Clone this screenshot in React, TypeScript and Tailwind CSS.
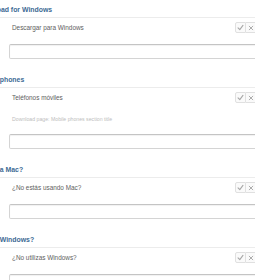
function Check() {
  return (
    <svg width="7" height="7" viewBox="0 0 10 10" fill="none">
      <path d="M1.5 5.5 L4 8 L8.5 2" stroke="#a8a8a8" strokeWidth="1.6" strokeLinecap="round" strokeLinejoin="round" />
    </svg>
  );
}

function Cross() {
  return (
    <svg width="6" height="6" viewBox="0 0 10 10" fill="none">
      <path d="M2 2 L8 8 M8 2 L2 8" stroke="#a8a8a8" strokeWidth="1.6" strokeLinecap="round" />
    </svg>
  );
}

type SectionProps = {
  title: string;
  label: string;
  note?: string;
};

function Section({ title, label, note }: SectionProps) {
  return (
    <div className="pb-[11px]">
      {/* Header, scrolled off to the left */}
      <div className="h-[17px] pt-[6px] ml-[-24px] text-[6.9px] leading-[8px] font-bold text-[#3d6a94] whitespace-nowrap">
        {title}
      </div>

      {/* Row */}
      <div className="border-t border-[#ececec] h-[20px] flex items-center justify-between pl-[12px]">
        <span className="text-[6.4px] text-[#5e5e5e] whitespace-nowrap">{label}</span>
        <div className="flex items-center mr-[-2px]">
          <div className="w-[11px] h-[11px] border border-[#e0e0e0] rounded-l-[2px] flex items-center justify-center bg-[#fafafa]">
            <Check />
          </div>
          <div className="w-[11px] h-[11px] border border-l-0 border-[#e0e0e0] flex items-center justify-center bg-[#fafafa]">
            <Cross />
          </div>
        </div>
      </div>

      {note && (
        <div className="mt-[9px] pl-[12px] text-[5.2px] leading-[6px] text-[#bdbdbd] whitespace-nowrap">
          {note}
        </div>
      )}

      {/* Input */}
      <div
        className={`${note ? 'mt-[12px]' : 'mt-[7px]'} ml-[9px] mr-[-10px] h-[15px] border border-[#d4d4d4] border-t-[#c4c4c4] rounded-[2px] shadow-[inset_0_1px_1px_rgba(0,0,0,0.06)] bg-white`}
      />
    </div>
  );
}

export default function App() {
  return (
    <div className="w-[255px] h-[280px] overflow-hidden bg-white font-['Liberation_Sans',Arial,sans-serif]">
      <Section title="Download for Windows" label="Descargar para Windows" />
      <Section
        title="Mobile phones"
        label="Teléfonos móviles"
        note="Download page: Mobile phones section title"
      />
      <Section title="Not on a Mac?" label="¿No estás usando Mac?" />
      <Section title="Not on Windows?" label="¿No utilizas Windows?" />
    </div>
  );
}
